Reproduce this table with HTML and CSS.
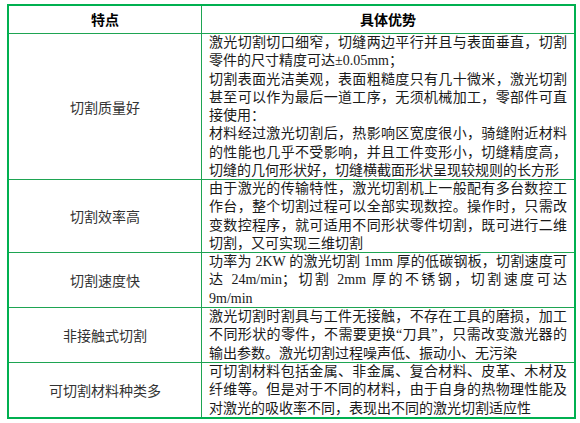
FILE: index.html
```html
<!DOCTYPE html>
<html lang="zh-CN">
<head>
<meta charset="utf-8">
<title>激光切割特点</title>
<link rel="stylesheet" href="styles.css">
</head>
<body>
<div class="tbl">
  <div class="cell head">特点</div>
  <div class="cell head right">具体优势</div>

  <div class="cell key r1">切割质量好</div>
  <div class="cell txt right r1">
    <span class="ln j">激光切割切口细窄，切缝两边平行并且与表面垂直，切割</span>
    <span class="ln">零件的尺寸精度可达±0.05mm；</span>
    <span class="ln j">切割表面光洁美观，表面粗糙度只有几十微米，激光切割</span>
    <span class="ln j">甚至可以作为最后一道工序，无须机械加工，零部件可直</span>
    <span class="ln">接使用：</span>
    <span class="ln j">材料经过激光切割后，热影响区宽度很小，骑缝附近材料</span>
    <span class="ln j">的性能也几乎不受影响，并且工件变形小，切缝精度高，</span>
    <span class="ln">切缝的几何形状好，切缝横截面形状呈现较规则的长方形</span>
  </div>

  <div class="cell key">切割效率高</div>
  <div class="cell txt right">
    <span class="ln j">由于激光的传输特性，激光切割机上一般配有多台数控工</span>
    <span class="ln j">作台，整个切割过程可以全部实现数控。操作时，只需改</span>
    <span class="ln j">变数控程序，就可适用不同形状零件切割，既可进行二维</span>
    <span class="ln">切割，又可实现三维切割</span>
  </div>

  <div class="cell key">切割速度快</div>
  <div class="cell txt right">
    <span class="ln j">功率为 2KW 的激光切割 1mm 厚的低碳钢板，切割速度可</span>
    <span class="ln j">达 24m/min；切割 2mm 厚的不锈钢，切割速度可达</span>
    <span class="ln">9m/min</span>
  </div>

  <div class="cell key">非接触式切割</div>
  <div class="cell txt right">
    <span class="ln j">激光切割时割具与工件无接触，不存在工具的磨损，加工</span>
    <span class="ln j">不同形状的零件，不需要更换“刀具”，只需改变激光器的</span>
    <span class="ln">输出参数。激光切割过程噪声低、振动小、无污染</span>
  </div>

  <div class="cell key last">可切割材料种类多</div>
  <div class="cell txt right last">
    <span class="ln j">可切割材料包括金属、非金属、复合材料、皮革、木材及</span>
    <span class="ln j">纤维等。但是对于不同的材料，由于自身的热物理性能及</span>
    <span class="ln">对激光的吸收率不同，表现出不同的激光切割适应性</span>
  </div>
</div>
</body>
</html>
```

FILE: styles.css
```css
html, body {
  margin: 0;
  padding: 0;
  background: #ffffff;
}

body {
  font-family: "Liberation Serif", "Noto Sans CJK SC", serif;
  font-size: 14px;
  color: #1a1a1a;
  overflow: hidden;
}

.tbl {
  margin: 4px 0 0 7px;
  width: 569px;
  box-sizing: border-box;
  border: 2px solid #00b050;
  display: grid;
  grid-template-columns: 193px 1fr;
  grid-template-rows: 28px 146px 73px 55px 55px 54px;
}

.cell {
  box-sizing: border-box;
  border-right: 1px solid #1ea452;
  border-bottom: 1px solid #1ea452;
}

.cell.right {
  border-right: none;
}

.cell.last {
  border-bottom: none;
}

.head {
  display: flex;
  align-items: center;
  justify-content: center;
  font-weight: bold;
  color: #000;
  padding-bottom: 1px;
}

.key {
  display: flex;
  align-items: center;
  justify-content: center;
  color: #333;
  font-family: "Noto Sans CJK SC", sans-serif;
}

.txt {
  padding: 0 7px 0 7px;
  line-height: 18.25px;
  color: #1a1a1a;
}

.ln {
  display: block;
  text-align: left;
}

.ln.j {
  text-align: justify;
  text-align-last: justify;
}
```
